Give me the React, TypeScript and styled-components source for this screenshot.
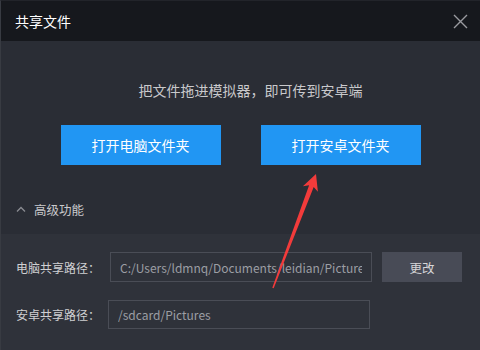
import styled, { createGlobalStyle } from "styled-components";

const GlobalStyle = createGlobalStyle`
  html, body {
    margin: 0;
    padding: 0;
    background: #2a2d35;
  }
  body {
    font-family: "Noto Sans CJK SC", "Liberation Sans", sans-serif;
  }
`;

const Window = styled.div`
  position: relative;
  width: 480px;
  height: 350px;
  box-sizing: border-box;
  display: flex;
  flex-direction: column;
  border-left: 1px solid #383b42;
  border-top: 1px solid #22242a;
  background: #2a2d35;
  overflow: hidden;
`;

const TitleBar = styled.div`
  height: 40px;
  flex-shrink: 0;
  display: flex;
  align-items: center;
  justify-content: space-between;
  padding: 0 12px 0 14px;
  background: #16181d;
`;

const Title = styled.span`
  color: #ffffff;
  font-size: 14px;
  line-height: 20px;
`;

const CloseButton = styled.button`
  width: 16px;
  height: 16px;
  padding: 0;
  border: none;
  background: transparent;
  display: flex;
  align-items: center;
  justify-content: center;
  cursor: pointer;
`;

const Body = styled.div`
  display: flex;
  flex-direction: column;
  padding-top: 39px;
`;

const Hint = styled.p`
  margin: 0;
  padding-left: 20px;
  text-align: center;
  color: #c9c9cc;
  font-size: 14px;
  line-height: 20px;
`;

const ButtonRow = styled.div`
  display: flex;
  justify-content: center;
  gap: 40px;
  margin-top: 25px;
`;

const BlueButton = styled.button`
  width: 160px;
  height: 40px;
  border: none;
  background: #2196f3;
  color: #ffffff;
  font-family: inherit;
  font-size: 14px;
  cursor: pointer;
`;

const AdvancedToggle = styled.div`
  display: flex;
  align-items: center;
  gap: 8px;
  margin-top: 34px;
  padding-left: 15px;
  height: 20px;
  color: #c9c9cc;
  font-size: 12.5px;
`;

const Panel = styled.div`
  flex: 1;
  margin-top: 15px;
  background: #2f323a;
  padding-top: 18px;
  display: flex;
  flex-direction: column;
  gap: 18px;
`;

const Row = styled.div<{ $indent: number }>`
  display: flex;
  align-items: center;
  padding-left: 15px;

  label {
    width: ${(p) => p.$indent}px;
    flex-shrink: 0;
    color: #d0d0d2;
    font-size: 12px;
  }
`;

const PathField = styled.input<{ $h: number }>`
  width: 262px;
  height: ${(p) => p.$h}px;
  box-sizing: border-box;
  padding: 0 9px;
  border: 1px solid #4a4d56;
  background: transparent;
  color: #9c9ea4;
  font-family: "Noto Sans CJK SC", "Liberation Sans", sans-serif;
  font-size: 12px;
  outline: none;
`;

const GreyButton = styled.button`
  width: 80px;
  height: 30px;
  margin-left: 10px;
  border: none;
  background: #484b56;
  color: #d6d6d8;
  font-family: inherit;
  font-size: 12.5px;
  cursor: pointer;
`;

const Overlay = styled.svg`
  position: absolute;
  left: -1px;
  top: -1px;
  pointer-events: none;
`;

export default function App() {
  return (
    <>
      <GlobalStyle />
      <Window>
        <TitleBar>
          <Title>共享文件</Title>
          <CloseButton aria-label="关闭">
            <svg width="15" height="15" viewBox="0 0 15 15">
              <path d="M1 1 L14 14 M14 1 L1 14" stroke="#9a9ba0" strokeWidth="1.4" />
            </svg>
          </CloseButton>
        </TitleBar>
        <Body>
          <Hint>把文件拖进模拟器，即可传到安卓端</Hint>
          <ButtonRow>
            <BlueButton>打开电脑文件夹</BlueButton>
            <BlueButton>打开安卓文件夹</BlueButton>
          </ButtonRow>
          <AdvancedToggle>
            <svg width="10" height="6" viewBox="0 0 10 6">
              <path d="M1 5.5 L5 1.5 L9 5.5" fill="none" stroke="#8a8c92" strokeWidth="1.3" />
            </svg>
            <span>高级功能</span>
          </AdvancedToggle>
        </Body>
        <Panel>
          <Row $indent={94}>
            <label>电脑共享路径：</label>
            <PathField $h={30} readOnly value="C:/Users/ldmnq/Documents/leidian/Pictures" />
            <GreyButton>更改</GreyButton>
          </Row>
          <Row $indent={92}>
            <label>安卓共享路径：</label>
            <PathField $h={29} readOnly value="/sdcard/Pictures" />
          </Row>
        </Panel>
        <Overlay width="480" height="350" viewBox="0 0 480 350">
          <polygon
            points="316,174 317.9,191.8 313.7,187.1 273.7,288.3 272.3,287.7 309.1,185.3 302.9,186.2"
            fill="#f23b3b"
          />
        </Overlay>
      </Window>
    </>
  );
}
